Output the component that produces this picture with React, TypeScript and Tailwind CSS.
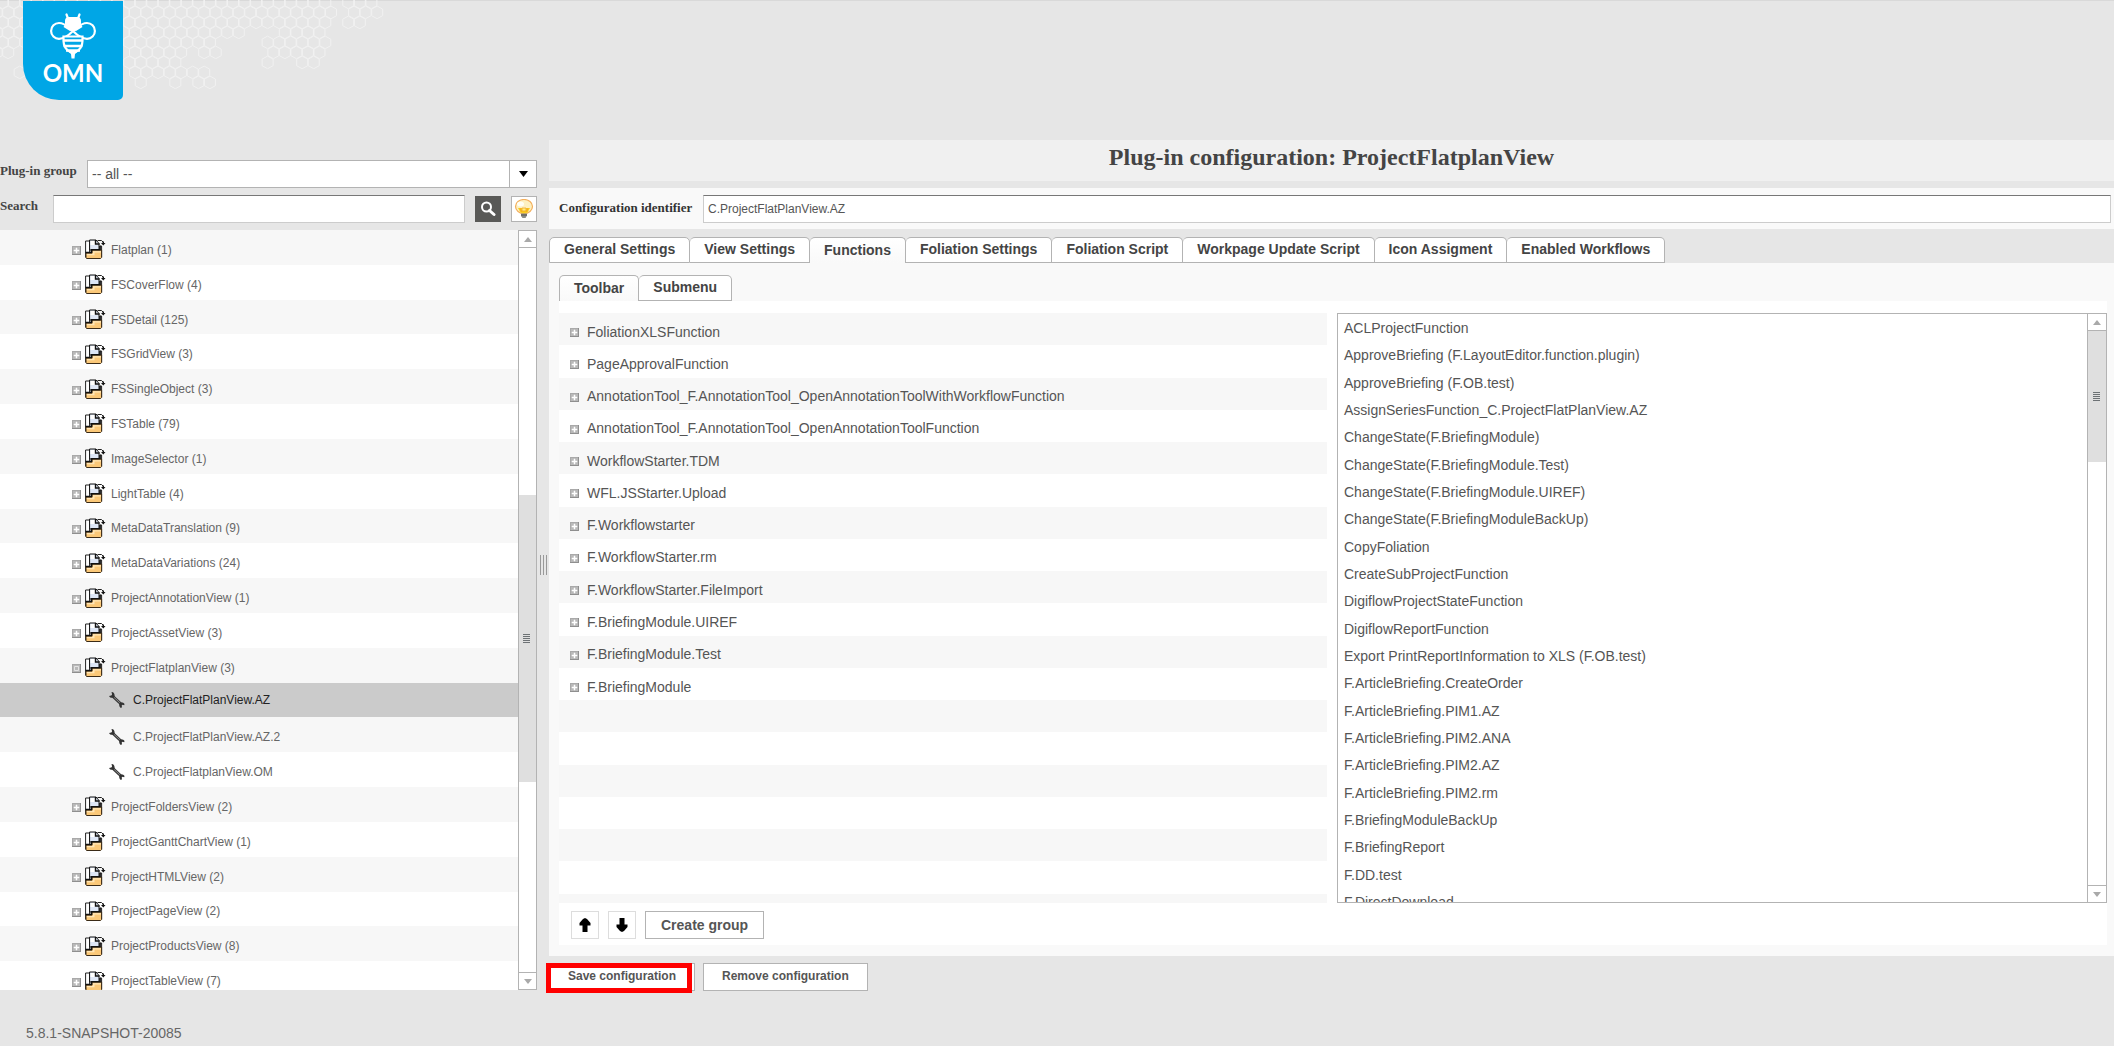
import { useState } from 'react';
import clsx from 'clsx';

type TreeNode = { label: string; leaf?: boolean; open?: boolean };

const tree: TreeNode[] = [
  { label: 'Flatplan (1)' },
  { label: 'FSCoverFlow (4)' },
  { label: 'FSDetail (125)' },
  { label: 'FSGridView (3)' },
  { label: 'FSSingleObject (3)' },
  { label: 'FSTable (79)' },
  { label: 'ImageSelector (1)' },
  { label: 'LightTable (4)' },
  { label: 'MetaDataTranslation (9)' },
  { label: 'MetaDataVariations (24)' },
  { label: 'ProjectAnnotationView (1)' },
  { label: 'ProjectAssetView (3)' },
  { label: 'ProjectFlatplanView (3)', open: true },
  { label: 'C.ProjectFlatPlanView.AZ', leaf: true },
  { label: 'C.ProjectFlatPlanView.AZ.2', leaf: true },
  { label: 'C.ProjectFlatplanView.OM', leaf: true },
  { label: 'ProjectFoldersView (2)' },
  { label: 'ProjectGanttChartView (1)' },
  { label: 'ProjectHTMLView (2)' },
  { label: 'ProjectPageView (2)' },
  { label: 'ProjectProductsView (8)' },
  { label: 'ProjectTableView (7)' },
];

const tabs = [
  'General Settings',
  'View Settings',
  'Functions',
  'Foliation Settings',
  'Foliation Script',
  'Workpage Update Script',
  'Icon Assigment',
  'Enabled Workflows',
];

const toolbarFunctions = [
  'FoliationXLSFunction',
  'PageApprovalFunction',
  'AnnotationTool_F.AnnotationTool_OpenAnnotationToolWithWorkflowFunction',
  'AnnotationTool_F.AnnotationTool_OpenAnnotationToolFunction',
  'WorkflowStarter.TDM',
  'WFL.JSStarter.Upload',
  'F.Workflowstarter',
  'F.WorkflowStarter.rm',
  'F.WorkflowStarter.FileImport',
  'F.BriefingModule.UIREF',
  'F.BriefingModule.Test',
  'F.BriefingModule',
  // empty rows keep the striping going
  '', '', '', '', '', '', '',
];

const availableFunctions = [
  'ACLProjectFunction',
  'ApproveBriefing (F.LayoutEditor.function.plugin)',
  'ApproveBriefing (F.OB.test)',
  'AssignSeriesFunction_C.ProjectFlatPlanView.AZ',
  'ChangeState(F.BriefingModule)',
  'ChangeState(F.BriefingModule.Test)',
  'ChangeState(F.BriefingModule.UIREF)',
  'ChangeState(F.BriefingModuleBackUp)',
  'CopyFoliation',
  'CreateSubProjectFunction',
  'DigiflowProjectStateFunction',
  'DigiflowReportFunction',
  'Export PrintReportInformation to XLS (F.OB.test)',
  'F.ArticleBriefing.CreateOrder',
  'F.ArticleBriefing.PIM1.AZ',
  'F.ArticleBriefing.PIM2.ANA',
  'F.ArticleBriefing.PIM2.AZ',
  'F.ArticleBriefing.PIM2.rm',
  'F.BriefingModuleBackUp',
  'F.BriefingReport',
  'F.DD.test',
  'F.DirectDownload',
];

// y, shifted by half a cell, [first, last] column ranges
const hexRows: [number, boolean, [number, number][]][] = [
  [2.5, true, [[-12, 16], [18, 20]]],
  [12.5, false, [[-12, 17], [19, 21]]],
  [22.5, true, [[-12, 16], [18, 19]]],
  [32.5, false, [[-12, 9], [13, 16]]],
  [42.5, true, [[-12, 6], [11, 16]]],
  [52.5, false, [[-12, -11], [0, 4], [6, 7], [12, 16]]],
  [62.5, true, [[-1, 3], [11, 11], [14, 15]]],
  [72.5, false, [[-10, -10], [0, 6]]],
  [82.5, true, [[0, 0], [3, 3], [5, 6]]],
];

function HexPattern() {
  const cells = hexRows.flatMap(([y, half, ranges]) =>
    ranges.flatMap(([from, to]) =>
      Array.from({ length: to - from + 1 }, (_, i) => ({ x: 135 + (from + i) * 11.53 + (half ? 5.76 : 0), y }))
    )
  );
  return (
    <svg width="400" height="100" className="absolute left-0 top-0" fill="none" stroke="#f1f1f1" strokeWidth="1" aria-hidden="true">
      {cells.map(({ x, y }) => (
        <path key={`${x}-${y}`} d={`M${x} ${y - 6.4}l5.5 3v6.6l-5.5 3l-5.5 -3v-6.6z`} />
      ))}
    </svg>
  );
}

function Logo() {
  return (
    <div className="absolute left-[23px] top-px flex h-[99px] w-[100px] flex-col items-center rounded-bl-[36px] rounded-br-[5px] bg-[#00a6e6] text-white">
      <svg width="48" height="46" viewBox="0 0 48 46" className="mt-3 shrink-0" fill="none" stroke="currentColor" strokeWidth="2.2" aria-hidden="true">
        <path d="M17.500 1.500l1.500 4M30.500 1.500l-1.500 4" strokeLinecap="round" />
        <path d="M16 8q0-4 4-4h8q4 0 4 4v3.500l1.500 2.500l-6.500 4l-3-.5l-3 .5l-6.500-4l1.500-2.500z" fill="currentColor" stroke="none" />
        <path d="M24 18c-5-4-8-8-14-8a7.800 7.800 0 1 0 0 15.800c6 0 10-3.800 14-7.800z" />
        <path d="M24 18c5-4 8-8 14-8a7.800 7.800 0 1 1 0 15.800c-6 0-10-3.800-14-7.800z" />
        <path d="M14.500 23.500h19v4.500c0 5-3 9.500-7 11h-5c-4-1.500-7-6-7-11z" fill="#00a6e6" />
        <path d="M14 27.500h20M14.500 33h19M17 37.500h14" strokeWidth="2.600" />
        <path d="M18.500 38h11l-3.500 3l-.500 4.500h-3l-.500-4.500z" fill="currentColor" stroke="none" />
      </svg>
      <span className="font-['Lato',sans-serif] text-[24px] font-bold leading-7">OMN</span>
    </div>
  );
}

function Toggle({ open = false }: { open?: boolean }) {
  return (
    <svg width="9" height="9" viewBox="0 0 9 9" className="mt-[2px] shrink-0" aria-hidden="true">
      <rect width="9" height="9" fill="#b9b9b9" />
      <path d="M8 0h1v9H0V8h8z" fill="#8f8f8f" />
      <path d="M0 0h8v1H1v7H0z" fill="#a9a9a9" />
      {open ? (
        <path d="M2.500 2.500h4v4h-4z" fill="none" stroke="#e4e4e4" />
      ) : (
        <path d="M4 2h1v2h2v1H5v2H4V5H2V4h2z" fill="#fff" stroke="#fff" strokeWidth=".5" />
      )}
    </svg>
  );
}

function PluginIcon() {
  return (
    <svg width="21" height="21" viewBox="0 0 21 21" className="shrink-0" aria-hidden="true">
      <path d="M.6 2h4v17h-3l-1-1z" fill="#fff" stroke="#222" />
      <path d="M15 7h1.600v11h-1.600z" fill="#e9e9f2" stroke="#222" />
      <path d="M4.600 1h6.400l3 3.500v6.500h-9.400z" fill="#dde6f6" stroke="#111" />
      <path d="M5.500 2h4.500v4h-4.500z" fill="#fff" />
      <path d="M10.500 1v4h4" fill="none" stroke="#111" strokeWidth="1.400" />
      <path d="M1 14h6v-3h9.600v7.500l-1 1h-14l-.6-1z" fill="#fbc878" stroke="#3b2b17" />
      <path d="M1.800 15h6v-2.800h8.200v1.300h-6.500v2.800h-7.700z" fill="#ffe6b8" />
      <path d="M.5 13.500h6v-2.800h8.500v-4" fill="none" stroke="#111" strokeWidth="1.500" />
      <path d="M12.500 1.500h4l1.500 1.500" fill="none" stroke="#222" />
      <path d="M16 4h4.500l-2.200 2.500zM17.500 2.500h1.500v2h-1.500z" fill="#111" />
    </svg>
  );
}

function WrenchIcon() {
  return (
    <svg width="16" height="16" viewBox="0 0 16 16" className="shrink-0" aria-hidden="true">
      <path d="M4 4.500l8 7.500" stroke="#3a3a3a" strokeWidth="2.800" />
      <path d="M5 5.300l6.500 6" stroke="#999" strokeWidth=".8" />
      <path d="M2.500 0c2.500 0 3.500 2 3 5c-2 1.500-4.500 1-5.500-1l2.300-.4l.8-1.200z" fill="#333" />
      <path d="M10.500 11c1.500-.8 4-.6 5 1l-.3 1.200l-1.700-.4l-.8.800l.3 1.700l-1.200.7c-1.500-1-2-3-1.300-5z" fill="#333" />
    </svg>
  );
}

function Bulb() {
  return (
    <svg width="20" height="20" viewBox="0 0 20 20" aria-hidden="true">
      <ellipse cx="10" cy="7.500" rx="8.500" ry="7" fill="#fdf0c0" stroke="#f3ae5c" strokeWidth="1.200" />
      <ellipse cx="6.500" cy="5" rx="3.500" ry="2.500" fill="#fffef4" />
      <path d="M4 9h12l-2.500 4.500q-3.500 2-7 0z" fill="#fbcf1e" />
      <path d="M6 9l1.500 4M14 9l-1.500 4M8 9h4v3H8z" fill="#fff07a" stroke="#ee9b27" strokeWidth=".7" />
      <path d="M7 14.500h6v2l-1.500 2.500h-3L7 17z" fill="#8b8b86" />
      <path d="M7 16h6" stroke="#555" />
    </svg>
  );
}

function ScrollButton({ down = false }: { down?: boolean }) {
  return (
    <button
      type="button"
      aria-label={down ? 'Scroll down' : 'Scroll up'}
      className={clsx('flex h-[17px] shrink-0 items-center justify-center border-[#b3b3b3] bg-white', down ? 'border-t' : 'border-b')}
    >
      <svg width="8" height="5" viewBox="0 0 8 5" fill="#a9a9a9" aria-hidden="true">
        <path d={down ? 'M0 0h8L4 5z' : 'M0 5h8L4 0z'} />
      </svg>
    </button>
  );
}

function Grip() {
  return (
    <svg width="7" height="9" viewBox="0 0 7 9" aria-hidden="true">
      <path d="M0 .5h7M0 2.500h7M0 4.500h7M0 6.500h7M0 8.500h7" stroke="#6d7275" />
    </svg>
  );
}

function Tab({ label, active, first, onClick }: { label: string; active: boolean; first: boolean; onClick: () => void }) {
  return (
    <button
      type="button"
      role="tab"
      aria-selected={active}
      onClick={onClick}
      className={clsx(
        'h-[26px] rounded-t-[5px] border-t border-r border-[#b3b3b3] px-[14px] pb-[2px] text-sm font-bold leading-4 text-[#444]',
        first && 'border-l',
        active ? 'bg-gradient-to-b from-white to-[#f9f9f9]' : 'border-b bg-white'
      )}
    >
      {label}
    </button>
  );
}

function Sidebar() {
  const [selected, setSelected] = useState('C.ProjectFlatPlanView.AZ');
  return (
    <aside className="flex w-[537px] shrink-0 flex-col gap-[7px] pt-5">
      <div className="flex h-7">
        <label htmlFor="group" className="w-[87px] font-['Liberation_Serif',serif] text-[13px] font-bold leading-[22px] text-[#444]">
          Plug-in group
        </label>
        <div className="relative flex-1">
          <select id="group" className="h-7 w-full appearance-none border border-[#b3b3b3] bg-white pl-1 text-sm text-[#555]">
            <option>-- all --</option>
          </select>
          <span className="pointer-events-none absolute right-0 top-0 flex h-7 w-7 items-center justify-center border border-[#b3b3b3]">
            <svg width="9" height="6" viewBox="0 0 9 6" aria-hidden="true">
              <path d="M0 0h9L4.500 6z" />
            </svg>
          </span>
        </div>
      </div>
      <div className="flex h-7">
        <label htmlFor="search" className="w-[53px] font-['Liberation_Serif',serif] text-[13px] font-bold leading-[22px] text-[#444]">
          Search
        </label>
        <input id="search" type="text" className="min-w-0 flex-1 border border-[#ccc] border-t-[#777] bg-white px-1 text-xs text-[#555]" />
        <button type="button" aria-label="Search" className="ml-[10px] flex h-[26px] w-[26px] items-center justify-center self-center bg-[#595957]">
          <svg width="16" height="16" viewBox="0 0 16 16" fill="none" stroke="#fff" aria-hidden="true">
            <circle cx="6.500" cy="6" r="4.500" strokeWidth="2" />
            <path d="M9.500 9.500l4.500 4" strokeWidth="3" strokeLinecap="round" />
          </svg>
        </button>
        <button type="button" aria-label="Hints" className="ml-[10px] flex h-[26px] w-[26px] items-center justify-center self-center border border-[#b3b3b3] bg-white">
          <Bulb />
        </button>
      </div>
      <div className="flex h-[760px]">
        <div className="min-w-0 flex-1 overflow-hidden">
          <ul role="tree" className="grid h-[766px] auto-rows-fr">
            {tree.map((node) => (
              <li
                key={node.label}
                role="treeitem"
                aria-selected={selected === node.label}
                onClick={() => node.leaf && setSelected(node.label)}
                className={clsx(
                  'flex min-h-0 items-center text-xs',
                  node.leaf ? 'gap-2 pl-[109px]' : 'pl-[72px]',
                  selected === node.label ? 'bg-[#cbcbcb]! text-[#222]' : 'pt-[5px] text-[#666]',
                  'odd:bg-[#f7f7f7] even:bg-white'
                )}
              >
                {node.leaf ? (
                  <WrenchIcon />
                ) : (
                  <span className="mr-[5px] flex items-center gap-1">
                    <Toggle open={node.open} />
                    <PluginIcon />
                  </span>
                )}
                {node.label}
              </li>
            ))}
          </ul>
        </div>
        <div className="flex w-[19px] flex-col border border-[#b3b3b3] bg-white">
          <ScrollButton />
          <div className="flex flex-1 flex-col">
            <div className="h-[247px]" />
            <div className="flex h-[287px] items-center justify-center bg-[#dfdfdf] pr-[2px]">
              <Grip />
            </div>
          </div>
          <ScrollButton down />
        </div>
      </div>
    </aside>
  );
}

function FunctionsPanel() {
  const [subTab, setSubTab] = useState('Toolbar');
  return (
    <div className="bg-[#f9f9f9] pt-3 pr-[7px] pb-[11px] pl-[10px]">
      <div role="tablist" className="flex">
        {['Toolbar', 'Submenu'].map((label, i) => (
          <Tab key={label} label={label} first={i === 0} active={subTab === label} onClick={() => setSubTab(label)} />
        ))}
      </div>
      <div className="bg-white pt-3 pb-[6px]">
        <div className="flex h-[590px] gap-[10px]">
          <div className="min-w-0 flex-1 overflow-hidden">
            <ul className="grid h-[613px] auto-rows-fr">
              {toolbarFunctions.map((name, i) => (
                <li key={i} className="flex min-h-0 items-center gap-2 pt-[5px] pl-[11px] text-sm text-[#555] odd:bg-[#f7f7f7] even:bg-white">
                  {name && <Toggle />}
                  {name}
                </li>
              ))}
            </ul>
          </div>
          <div className="flex min-w-0 flex-1 border border-[#b3b3b3] bg-white">
            <div className="min-w-0 flex-1 overflow-hidden">
              <ul role="listbox" aria-label="Available functions" className="grid h-[601px] auto-rows-fr">
                {availableFunctions.map((name) => (
                  <li key={name} role="option" aria-selected={false} className="flex min-h-0 items-center pt-px pl-[6px] text-sm text-[#555]">
                    {name}
                  </li>
                ))}
              </ul>
            </div>
            <div className="flex w-[19px] flex-col border-l border-[#b3b3b3]">
              <ScrollButton />
              <div className="flex flex-1 flex-col">
                <div className="flex h-[131px] items-center justify-center bg-[#dfdfdf] pr-[2px]">
                  <Grip />
                </div>
              </div>
              <ScrollButton down />
            </div>
          </div>
        </div>
        <div className="flex gap-[9px] pt-2 pl-3">
          <button type="button" aria-label="Move up" className="flex h-7 w-7 items-center justify-center border border-[#ddd]">
            <svg width="12" height="14" viewBox="0 0 12 14" aria-hidden="true">
              <path d="M6 0l2 1l3.500 4v2.500H8.500V14h-5V7.500H.5V5L4 1z" />
            </svg>
          </button>
          <button type="button" aria-label="Move down" className="flex h-7 w-7 items-center justify-center border border-[#ddd]">
            <svg width="12" height="14" viewBox="0 0 12 14" aria-hidden="true">
              <path d="M6 14l-2-1L.5 9V6.500h3V0h5v6.500h3V9L8 13z" />
            </svg>
          </button>
          <button type="button" className="h-7 border border-[#b3b3b3] px-[15px] text-sm font-bold text-[#555]">
            Create group
          </button>
        </div>
      </div>
    </div>
  );
}

export default function App() {
  const [tab, setTab] = useState('Functions');
  return (
    <div className="flex min-h-screen flex-col border-t border-[#d9d9d9] bg-[#e6e6e6] font-['Liberation_Sans',Arial,sans-serif]">
      <header className="relative -mt-px h-[140px]">
        <HexPattern />
        <Logo />
      </header>
      <main className="flex">
        <Sidebar />
        <div className="flex w-3 shrink-0 items-start pt-[415px] pl-[3px]">
          <div className="flex gap-[2px]">
            <span className="h-5 w-px bg-[#999]" />
            <span className="h-5 w-px bg-[#999]" />
            <span className="h-5 w-px bg-[#999]" />
          </div>
        </div>
        <section className="min-w-0 flex-1">
          <h1 className="h-[41px] bg-[#f0f0f0] text-center font-['Liberation_Serif',serif] text-2xl font-bold leading-[34px] text-[#444]">
            Plug-in configuration: ProjectFlatplanView
          </h1>
          <div className="mt-[7px] flex h-[41px] items-center bg-[#f9f9f9] pr-[3px] pl-[10px]">
            <label htmlFor="identifier" className="w-36 pb-[2px] font-['Liberation_Serif',serif] text-[13px] font-bold text-[#333]">
              Configuration identifier
            </label>
            <input
              id="identifier"
              type="text"
              defaultValue="C.ProjectFlatPlanView.AZ"
              className="h-7 min-w-0 flex-1 border border-[#ccc] border-t-[#777] bg-white px-1 text-xs text-[#555]"
            />
          </div>
          <div role="tablist" className="mt-2 flex">
            {tabs.map((label, i) => (
              <Tab key={label} label={label} first={i === 0} active={tab === label} onClick={() => setTab(label)} />
            ))}
          </div>
          <FunctionsPanel />
          <div className="mt-[7px] flex gap-2">
            <div className="relative">
              <button type="button" className="h-7 border border-[#b3b3b3] bg-white px-[18px] pb-[2px] text-xs font-bold text-[#555]">
                Save configuration
              </button>
              <span className="pointer-events-none absolute -left-[3px] top-0 h-[30px] w-full border-5 border-[#f00]" />
            </div>
            <button type="button" className="h-7 border border-[#b3b3b3] bg-white px-[18px] pb-[2px] text-xs font-bold text-[#555]">
              Remove configuration
            </button>
          </div>
        </section>
      </main>
      <footer className="mt-auto px-[26px] pb-1 text-sm leading-[18px] text-[#666]">5.8.1-SNAPSHOT-20085</footer>
    </div>
  );
}
